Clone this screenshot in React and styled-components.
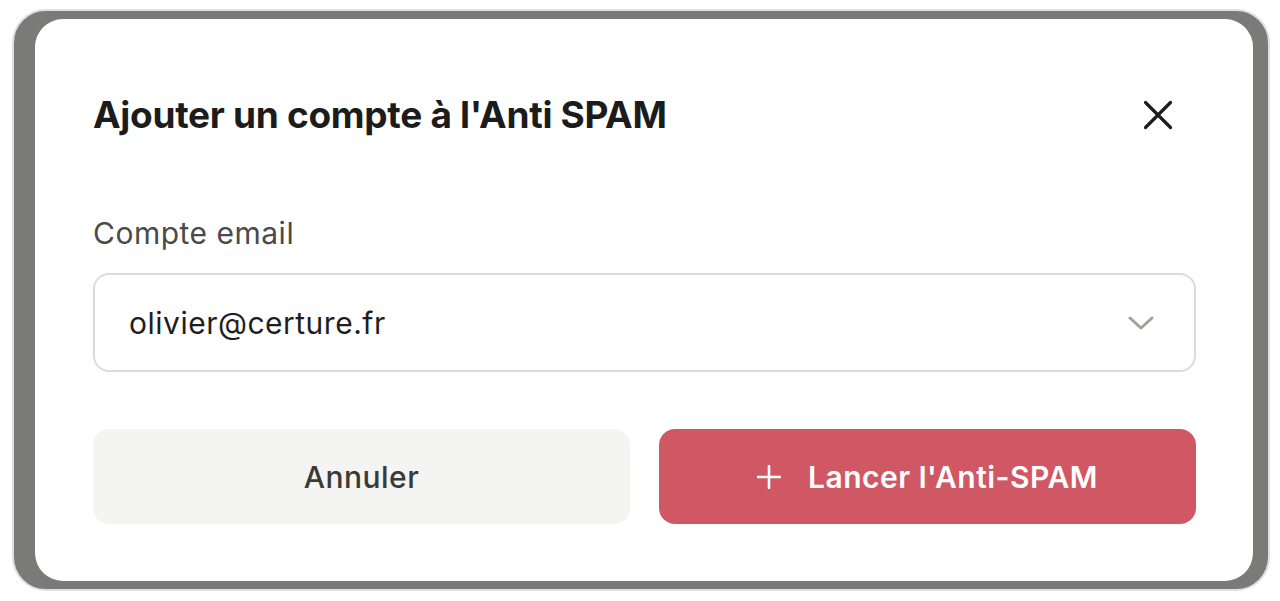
import React from 'react'
import styled, { createGlobalStyle } from 'styled-components'

const GlobalStyle = createGlobalStyle`
  html, body {
    margin: 0;
    padding: 0;
    background: #ffffff;
  }
  body {
    font-family: Inter, "Liberation Sans", sans-serif;
  }
  * { box-sizing: border-box; }
`

const Frame = styled.div`
  margin: 9px 10px 10px 12px;
  height: 582px;
  border: 2px solid #dedee3;
  border-radius: 34px;
  background: #7a7a78;
  padding: 8px 15px 8px 21px;
  display: flex;
`

const Card = styled.div`
  flex: 1;
  background: #ffffff;
  border-radius: 28px;
  padding: 74px 57px 55px 58px;
  display: flex;
  flex-direction: column;
`

const Header = styled.div`
  display: flex;
  align-items: center;
  justify-content: space-between;
`

const Title = styled.h1`
  margin: 0;
  font-family: Inter, "Liberation Sans", sans-serif;
  font-weight: 700;
  font-size: 37px;
  line-height: 44px;
  letter-spacing: -0.3px;
  color: #1c1c1c;
`

const CloseButton = styled.button`
  border: none;
  background: none;
  padding: 0;
  margin-right: 22px;
  width: 32px;
  height: 32px;
  display: flex;
  align-items: center;
  justify-content: center;
  cursor: pointer;
`

const Label = styled.label`
  margin-top: 78px;
  font-size: 30px;
  line-height: 36px;
  letter-spacing: 0.5px;
  color: #4a4a48;
`

const Select = styled.div`
  margin-top: 22px;
  height: 99px;
  border: 2px solid #dcdcd8;
  border-radius: 16px;
  padding: 0 40px 0 34px;
  display: flex;
  align-items: center;
  justify-content: space-between;
  font-size: 30px;
  letter-spacing: 0.5px;
  color: #1e1e1e;
`

const Actions = styled.div`
  margin-top: 57px;
  display: grid;
  grid-template-columns: 1fr 1fr;
  gap: 29px;
`

const Button = styled.button`
  height: 95px;
  border: none;
  border-radius: 16px;
  font-family: Inter, "Liberation Sans", sans-serif;
  font-size: 30px;
  letter-spacing: 0.5px;
  font-weight: ${p => (p.$primary ? 600 : 500)};
  background: ${p => (p.$primary ? '#d05865' : '#f4f4f2')};
  color: ${p => (p.$primary ? '#ffffff' : '#3a3a38')};
  display: flex;
  align-items: center;
  justify-content: center;
  gap: 27px;
  cursor: pointer;
`

export default function App() {
  return (
    <>
      <GlobalStyle />
      <Frame>
        <Card>
          <Header>
            <Title>Ajouter un compte à l'Anti SPAM</Title>
            <CloseButton aria-label="Fermer">
              <svg width="30" height="30" viewBox="0 0 30 30" fill="none">
                <path d="M2.5 2.5L27.5 27.5M27.5 2.5L2.5 27.5" stroke="#1c1c1c" strokeWidth="3.2" strokeLinecap="round" />
              </svg>
            </CloseButton>
          </Header>
          <Label>Compte email</Label>
          <Select>
            <span>olivier@certure.fr</span>
            <svg width="26" height="16" viewBox="0 0 26 16" fill="none">
              <path d="M2 3L13 13L24 3" stroke="#a0a09c" strokeWidth="3" strokeLinecap="round" strokeLinejoin="round" />
            </svg>
          </Select>
          <Actions>
            <Button>Annuler</Button>
            <Button $primary>
              <svg width="24" height="24" viewBox="0 0 24 24" fill="none">
                <path d="M12 1V23M1 12H23" stroke="#ffffff" strokeWidth="2.6" strokeLinecap="round" />
              </svg>
              Lancer l'Anti-SPAM
            </Button>
          </Actions>
        </Card>
      </Frame>
    </>
  )
}
